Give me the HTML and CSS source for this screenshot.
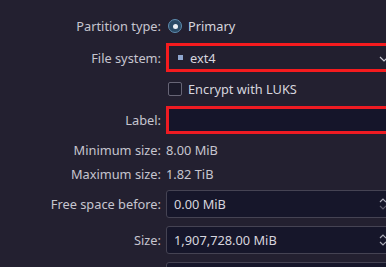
FILE: index.html
```html
<!DOCTYPE html>
<html>
<head>
<meta charset="utf-8">
<link rel="stylesheet" href="styles.css">
</head>
<body>
<div class="form">
  <div class="lbl">Partition type:</div>
  <div class="fld row"><span class="radio"><span class="dot"></span></span><span class="val">Primary</span></div>

  <div class="lbl">File system:</div>
  <div class="fld combo">
    <span class="fsicon"></span><span class="val">ext4</span>
    <svg class="chev" width="10" height="6" viewBox="0 0 10 6"><path d="M1 1 L5 5 L9 1" fill="none" stroke="#c8c8d2" stroke-width="1.2"/></svg>
  </div>

  <div class="lbl"></div>
  <div class="fld row"><span class="check"></span><span class="val">Encrypt with LUKS</span></div>

  <div class="lbl">Label:</div>
  <div class="fld labelbox"></div>

  <div class="lbl">Minimum size:</div>
  <div class="fld plain">8.00 MiB</div>

  <div class="lbl">Maximum size:</div>
  <div class="fld plain">1.82 TiB</div>

  <div class="lbl">Free space before:</div>
  <div class="fld spin"><span class="val">0.00 MiB</span>
    <span class="arrows"><svg width="8" height="5" viewBox="0 0 8 5"><path d="M1 4 L4 1 L7 4" fill="none" stroke="#a8a8b4" stroke-width="1.2"/></svg><svg width="8" height="5" viewBox="0 0 8 5"><path d="M1 1 L4 4 L7 1" fill="none" stroke="#5c5a6a" stroke-width="1.2"/></svg></span>
  </div>

  <div class="lbl">Size:</div>
  <div class="fld spin"><span class="val">1,907,728.00 MiB</span>
    <span class="arrows"><svg width="8" height="5" viewBox="0 0 8 5"><path d="M1 4 L4 1 L7 4" fill="none" stroke="#a8a8b4" stroke-width="1.2"/></svg><svg width="8" height="5" viewBox="0 0 8 5"><path d="M1 1 L4 4 L7 1" fill="none" stroke="#a8a8b4" stroke-width="1.2"/></svg></span>
  </div>

  <div class="lbl"></div>
  <div class="fld spin"></div>
</div>
</body>
</html>
```

FILE: styles.css
```css
html, body {
  margin: 0;
  padding: 0;
  background: #232030;
  overflow: hidden;
  width: 386px;
  height: 267px;
}
body {
  font-family: "Noto Sans", "DejaVu Sans", sans-serif;
  font-size: 12.8px;
  color: #c6c5cf;
}
.form {
  display: grid;
  grid-template-columns: 161px 260px;
  grid-template-rows: 18px 29px 18px 28px 16px 16px 28px 28px 28px;
  column-gap: 5px;
  row-gap: 8px;
  padding-top: 17px;
  width: 426px;
}
.lbl {
  text-align: right;
  display: flex;
  align-items: center;
  justify-content: flex-end;
  white-space: nowrap;
  line-height: 16px;
}
.fld {
  display: flex;
  align-items: center;
  white-space: nowrap;
  box-sizing: border-box;
  color: #d6d5de;
}
.row .val { margin-left: 6px; }
.radio {
  width: 14px;
  height: 14px;
  margin-left: 2px;
  box-sizing: border-box;
  border-radius: 50%;
  border: 1px solid #5f8db0;
  background: #2b4b66;
  display: flex;
  align-items: center;
  justify-content: center;
}
.dot {
  width: 5px;
  height: 5px;
  border-radius: 50%;
  background: #eef2f6;
}
.check {
  width: 14px;
  height: 14px;
  margin-left: 2px;
  box-sizing: border-box;
  border: 1px solid #676576;
  border-radius: 2px;
  background: #1b1a2a;
}
.combo {
  border: 3px solid #f51b1e;
  background: #221f2f;
  padding-left: 9px;
  position: relative;
}
.fsicon {
  width: 5px;
  height: 5px;
  background: #8fa6cf;
  margin-right: 7px;
  margin-top: -1px;
}
.chev {
  position: absolute;
  left: 210px;
  top: 10px;
}
.labelbox {
  border: 3px solid #ee1b22;
  background: #15152a;
}
.plain { color: #c6c5cf; }
.spin {
  border: 1px solid #454353;
  border-radius: 3px;
  background: #16162a;
  padding-left: 7px;
  position: relative;
}
.arrows {
  position: absolute;
  left: 212px;
  top: 7px;
  display: flex;
  flex-direction: column;
  gap: 2px;
}
.arrows svg { display: block; }
```
